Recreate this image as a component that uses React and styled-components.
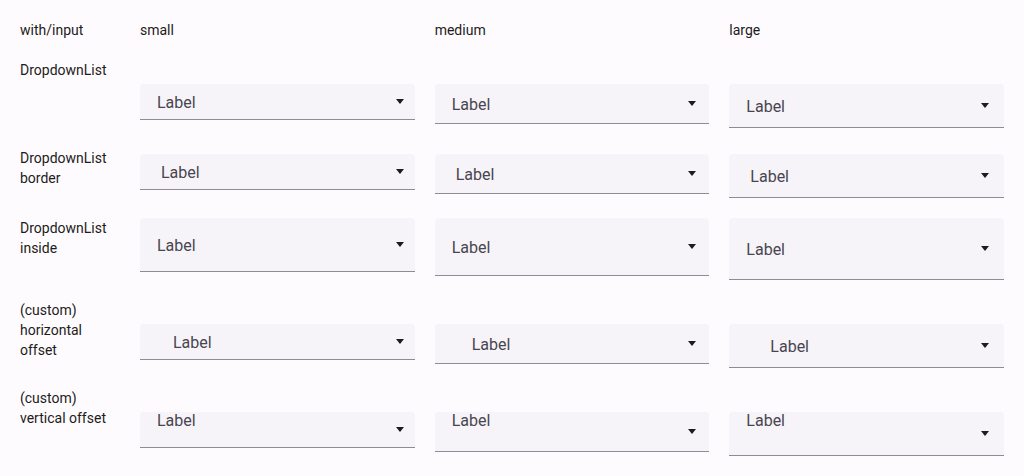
import React from "react";
import styled, { createGlobalStyle } from "styled-components";

const GlobalStyle = createGlobalStyle`
  html, body {
    margin: 0;
    background: #fefbfe;
    font-family: Roboto, "Liberation Sans", sans-serif;
    color: #1d1b20;
  }
`;

const sizes = {
  small: { height: 36, arrowRight: 11 },
  medium: { height: 40, arrowRight: 13 },
  large: { height: 44, arrowRight: 15 },
};

const horizontalPad = { small: 33, medium: 37, large: 41 };

const rows = [
  { title: ["DropdownList"], offset: 24, variant: "plain" },
  { title: ["DropdownList", "border"], offset: 6, variant: "border" },
  { title: ["DropdownList", "inside"], offset: 0, variant: "inside" },
  { title: ["(custom)", "horizontal", "offset"], offset: 24, variant: "horizontal" },
  { title: ["(custom)", "vertical offset"], offset: 24, variant: "vertical" },
];

function padFor(variant, size) {
  if (variant === "border") return 21;
  if (variant === "horizontal") return horizontalPad[size];
  return 17;
}

function Dropdown({ size, variant }) {
  const { height, arrowRight } = sizes[size];
  const h = variant === "inside" ? height + 18 : height;

  return (
    <Field $height={h} $pad={padFor(variant, size)}>
      <FieldLabel $top={variant === "vertical"}>Label</FieldLabel>
      <Arrow $right={arrowRight} width="8" height="5" viewBox="0 0 8 5">
        <path d="M0 0 L8 0 L4 5 Z" fill="#1d1b20" />
      </Arrow>
    </Field>
  );
}

export default function App() {
  return (
    <>
      <GlobalStyle />
      <Page>
        <Row>
          <RowTitle>with/input</RowTitle>
          <ColHead>small</ColHead>
          <ColHead>medium</ColHead>
          <ColHead>large</ColHead>
        </Row>
        {rows.map((row) => (
          <Row key={row.title.join(" ")}>
            <RowTitle>
              {row.title.map((line) => (
                <div key={line}>{line}</div>
              ))}
            </RowTitle>
            {["small", "medium", "large"].map((size) => (
              <Cell key={size} $offset={row.offset}>
                <Dropdown size={size} variant={row.variant} />
              </Cell>
            ))}
          </Row>
        ))}
      </Page>
    </>
  );
}

const Page = styled.div`
  padding: 20px;
  display: flex;
  flex-direction: column;
  gap: 20px;
`;

const Row = styled.div`
  display: grid;
  grid-template-columns: 100px repeat(3, 1fr);
  column-gap: 20px;
  align-items: start;
`;

const RowTitle = styled.div`
  font-size: 14px;
  line-height: 20px;
  color: #1d1b20;
`;

const ColHead = styled.div`
  font-size: 14px;
  line-height: 20px;
`;

const Cell = styled.div`
  padding-top: ${(props) => props.$offset}px;
`;

const Field = styled.div`
  box-sizing: border-box;
  height: ${(props) => props.$height}px;
  display: flex;
  align-items: center;
  padding-left: ${(props) => props.$pad}px;
  background: #f6f4f9;
  border-bottom: 1px solid #8f8b94;
  border-radius: 4px 4px 0 0;
`;

const FieldLabel = styled.span`
  font-size: 16px;
  line-height: 16px;
  color: #49454f;
  align-self: ${(props) => (props.$top ? "flex-start" : "center")};
  margin-top: ${(props) => (props.$top ? "1px" : "2px")};
`;

const Arrow = styled.svg`
  margin-left: auto;
  margin-right: ${(props) => props.$right}px;
  flex: none;
`;
